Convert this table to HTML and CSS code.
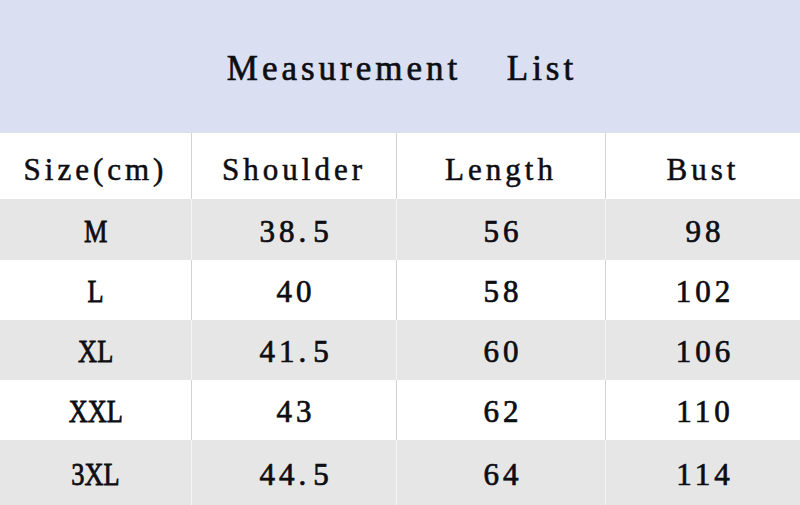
FILE: index.html
```html
<!DOCTYPE html>
<html>
<head>
<meta charset="utf-8">
<link rel="stylesheet" href="styles.css">
</head>
<body>
<div class="page">
  <div class="title-band"><span class="title">Measurement  List</span></div>
  <div class="row head">
    <div class="cell"><span class="hd">Size(cm)</span></div>
    <div class="cell"><span class="hd">Shoulder</span></div>
    <div class="cell"><span class="hd">Length</span></div>
    <div class="cell"><span class="hd">Bust</span></div>
  </div>
  <div class="row gray r1">
    <div class="cell"><span class="lab">M</span></div>
    <div class="cell"><span class="num">38<span class="dot">.</span>5</span></div>
    <div class="cell"><span class="num">56</span></div>
    <div class="cell"><span class="num">98</span></div>
  </div>
  <div class="row white">
    <div class="cell"><span class="lab">L</span></div>
    <div class="cell"><span class="num">40</span></div>
    <div class="cell"><span class="num">58</span></div>
    <div class="cell"><span class="num">102</span></div>
  </div>
  <div class="row gray">
    <div class="cell"><span class="lab">XL</span></div>
    <div class="cell"><span class="num">41<span class="dot">.</span>5</span></div>
    <div class="cell"><span class="num">60</span></div>
    <div class="cell"><span class="num">106</span></div>
  </div>
  <div class="row white">
    <div class="cell"><span class="lab">XXL</span></div>
    <div class="cell"><span class="num">43</span></div>
    <div class="cell"><span class="num">62</span></div>
    <div class="cell"><span class="num">110</span></div>
  </div>
  <div class="row gray last">
    <div class="cell"><span class="lab">3XL</span></div>
    <div class="cell"><span class="num">44<span class="dot">.</span>5</span></div>
    <div class="cell"><span class="num">64</span></div>
    <div class="cell"><span class="num">114</span></div>
  </div>
</div>
</body>
</html>
```

FILE: styles.css
```css
html, body {
  margin: 0;
  padding: 0;
  background: #ffffff;
}
.page {
  width: 800px;
  height: 505px;
  overflow: hidden;
  display: flex;
  flex-direction: column;
  color: #0d0d12;
}
.title-band {
  height: 133px;
  background: #dae0f2;
  display: flex;
  align-items: center;
  justify-content: center;
  padding-top: 5px;
  box-sizing: border-box;
}
.title {
  display: inline-block;
  font-family: "Liberation Serif", serif;
  font-size: 35px;
  letter-spacing: 4px;
  word-spacing: 10px;
  margin-right: -4px;
  white-space: pre;
  -webkit-text-stroke: 0.65px #0d0d12;
}
.row {
  display: grid;
  grid-template-columns: 191px 205px 209px 195px;
  height: 60px;
}
.row.head { height: 66px; background: #ffffff; }
.row.r1 { height: 61px; }
.row.last { height: 65px; }
.gray { background: #e6e6e6; }
.white { background: #ffffff; }
.cell {
  display: flex;
  align-items: center;
  justify-content: center;
  padding-top: 4px;
  box-sizing: border-box;
}
.cell + .cell { border-left: 1px solid #d2d2d2; }
.gray .cell + .cell { border-left-color: #f4f4f4; }
.head .cell { padding-top: 8px; }
.hd {
  display: inline-block;
  font-family: "Liberation Serif", serif;
  font-size: 31px;
  letter-spacing: 4px;
  margin-right: -4px;
  margin-left: -4px;
  white-space: pre;
  -webkit-text-stroke: 0.55px #0d0d12;
}
.lab {
  display: inline-block;
  font-family: "Liberation Serif", serif;
  font-size: 31px;
  transform: scaleX(0.85);
  -webkit-text-stroke: 0.8px #0d0d12;
}
.num {
  display: inline-block;
  font-family: "Liberation Serif", serif;
  font-size: 31px;
  letter-spacing: 4px;
  margin-right: -4px;
  -webkit-text-stroke: 0.7px #0d0d12;
}
.dot { letter-spacing: 7px; }
```
